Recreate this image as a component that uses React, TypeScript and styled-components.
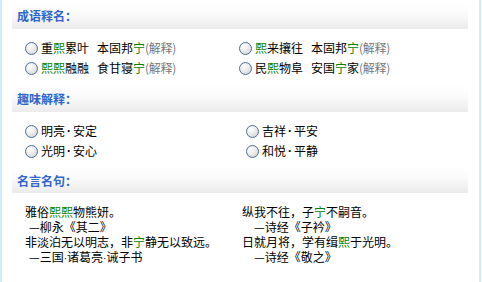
import React from "react";
import styled, { createGlobalStyle } from "styled-components";

const Global = createGlobalStyle`
  html, body { margin: 0; padding: 0; background: #fff; }
  body { font-family: "Noto Sans CJK SC", "Liberation Sans", sans-serif; font-size: 12px; color: #000; }
`;

const Frame = styled.div`
  width: 481px;
  height: 282px;
  border-left: 2px solid #d3eafa;
  border-right: 2px solid #d3eafa;
  padding: 0 11px 0 10px;
  box-sizing: border-box;
  display: flex;
  flex-direction: column;
`;

const Header = styled.div<{ $top: number; $pad: number }>`
  margin-top: ${(p) => p.$top}px;
  height: 29px;
  box-sizing: border-box;
  padding: ${(p) => p.$pad}px 0 0 5px;
  display: flex;
  align-items: center;
  background: linear-gradient(to bottom, #ffffff 0%, #fbfbfb 45%, #ebebeb 100%);
`;

const Title = styled.h3`
  margin: 0;
  font-size: 12px;
  font-weight: bold;
  color: #2f66cc;
  line-height: 14px;
`;

const Grid = styled.div<{ $col: number; $top: number }>`
  display: grid;
  grid-template-columns: ${(p) => p.$col}px 1fr;
  padding: ${(p) => p.$top}px 0 0 13px;
`;

const Option = styled.label`
  display: flex;
  align-items: center;
  height: 20px;
  white-space: nowrap;
  line-height: 20px;
`;

const Radio = styled.span`
  width: 11px;
  height: 11px;
  border-radius: 50%;
  border: 1px solid #4d6f99;
  background: radial-gradient(circle at 35% 30%, #ffffff 0%, #f0f0f0 35%, #cfcfcf 100%);
  margin-right: 3px;
  flex: none;
`;

const Hl = styled.span`
  display: inline-block;
  color: #008000;
`;

const Gap = styled.span`
  display: inline-block;
  width: 8px;
`;

const Explain = styled.span`
  color: #777;
  letter-spacing: -0.3px;
`;

const Dot = styled.span`
  font-family: "Liberation Sans", sans-serif;
  font-weight: bold;
  padding: 0 2px;
`;

const Quote = styled.div`
  display: flex;
  flex-direction: column;
`;

const Line = styled.div<{ $indent?: number }>`
  line-height: 15px;
  height: 15px;
  white-space: nowrap;
  padding-left: ${(p) => p.$indent ?? 0}px;
`;

const Small = styled.span`
  display: inline-block;
  font-family: "Liberation Sans", sans-serif;
  font-size: 10px;
`;

function Idiom({ children }: { children: React.ReactNode }) {
  return (
    <Option>
      <Radio />
      <span>
        {children}
        <Explain>(解释)</Explain>
      </span>
    </Option>
  );
}

export default function App() {
  return (
    <>
      <Global />
      <Frame>
        <Header $top={0} $pad={3}>
          <Title>成语释名：</Title>
        </Header>
        <Grid $col={214} $top={9}>
          <Idiom>
            重<Hl>熙</Hl>累叶<Gap />本固邦<Hl>宁</Hl>
          </Idiom>
          <Idiom>
            <Hl>熙</Hl>来攘往<Gap />本固邦<Hl>宁</Hl>
          </Idiom>
          <Idiom>
            <Hl>熙熙</Hl>融融<Gap />食甘寝<Hl>宁</Hl>
          </Idiom>
          <Idiom>
            民<Hl>熙</Hl>物阜<Gap />安国<Hl>宁</Hl>家
          </Idiom>
        </Grid>

        <Header $top={5} $pad={2}>
          <Title>趣味解释：</Title>
        </Header>
        <Grid $col={221} $top={9}>
          <Option>
            <Radio />
            明亮<Dot>·</Dot>安定
          </Option>
          <Option>
            <Radio />
            吉祥<Dot>·</Dot>平安
          </Option>
          <Option>
            <Radio />
            光明<Dot>·</Dot>安心
          </Option>
          <Option>
            <Radio />
            和悦<Dot>·</Dot>平静
          </Option>
        </Grid>

        <Header $top={3} $pad={5}>
          <Title>名言名句：</Title>
        </Header>
        <Grid $col={217} $top={11}>
          <Quote>
            <Line>
              雅俗<Hl>熙熙</Hl>物熊妍。
            </Line>
            <Line $indent={4}>—柳永《其二》</Line>
            <Line>
              非淡泊无以明志，非<Hl>宁</Hl>静无以致远。
            </Line>
            <Line $indent={4}>
              —三国<Small>·</Small>诸葛亮<Small>·</Small>诫子书
            </Line>
          </Quote>
          <Quote>
            <Line>
              纵我不往，子<Hl>宁</Hl>不嗣音。
            </Line>
            <Line $indent={12}>—诗经《子衿》</Line>
            <Line>
              日就月将，学有缉<Hl>熙</Hl>于光明。
            </Line>
            <Line $indent={12}>—诗经《敬之》</Line>
          </Quote>
        </Grid>
      </Frame>
    </>
  );
}
